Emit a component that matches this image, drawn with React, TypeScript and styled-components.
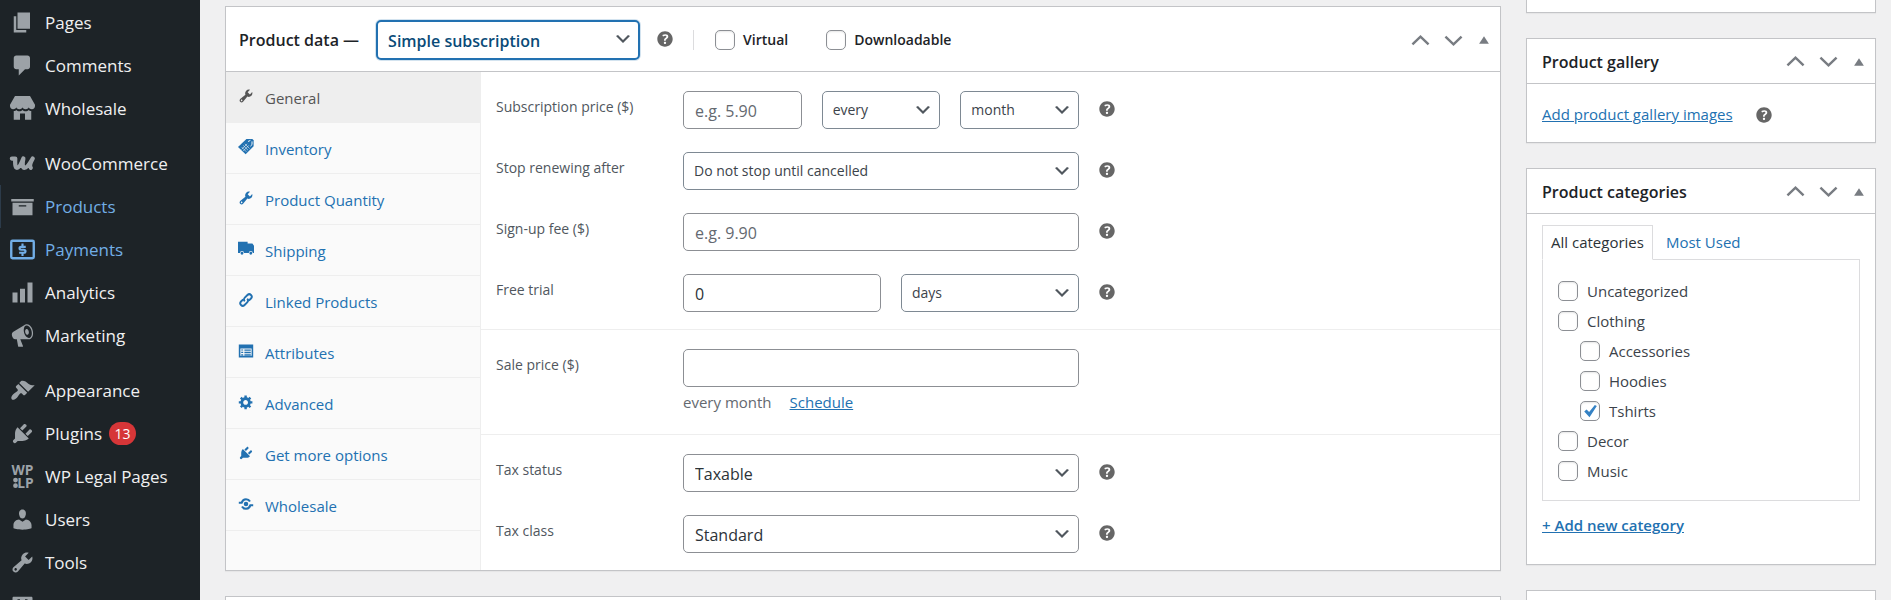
import React, { useId, useState } from "react";
import styled, { createGlobalStyle, css } from "styled-components";

const GlobalStyle = createGlobalStyle`
  * { box-sizing: border-box; }
  body {
    margin: 0;
    background: #f0f0f1;
    color: #3c434a;
    font-family: "Segoe UI", "Open Sans", "Noto Sans", sans-serif;
    font-size: 15px;
    line-height: 24px;
  }
  button, input, select { font-family: inherit; color: inherit; margin: 0; }
  ul { list-style: none; margin: 0; padding: 0; }
`;

/* ---------- icons ---------- */

const wrench =
  "M16.68 9.77c-1.34 1.34-3.3 1.67-4.95.99l-5.41 6.52c-.99.99-2.59.99-3.58 0s-.99-2.59 0-3.57l6.52-5.42c-.68-1.65-.35-3.61.99-4.95 1.28-1.28 3.12-1.62 4.72-1.06l-2.89 2.89 2.82 2.82 2.86-2.87c.53 1.58.18 3.39-1.08 4.65zM3.81 16.21c.4.39 1.04.39 1.43 0 .4-.4.4-1.04 0-1.43-.39-.4-1.03-.4-1.43 0-.39.39-.39 1.03 0 1.43z";
const plug =
  "M13.11 4.36L9.87 7.6 8 5.73l3.24-3.24c.35-.34 1.05-.2 1.56.32.52.51.66 1.21.31 1.55zm-8 1.77l.91-1.12 9.01 9.01-1.19.84c-.71.71-2.63 1.16-3.82 1.16H6.14L4.9 17.26c-.59.59-1.54.59-2.12 0-.59-.58-.59-1.53 0-2.12l1.24-1.24v-3.88c0-1.13.4-3.19 1.09-3.89zm7.26 3.97l3.24-3.24c.34-.35 1.04-.21 1.55.31.52.51.66 1.21.31 1.55l-3.24 3.25z";

const icons: Record<string, React.ReactNode> = {
  pages: <path d="M6 15V2h10v13H6zm-1 1h8v2H3V5h2v11z" />,
  comments: (
    <path d="M5 2h9c1.1 0 2 .9 2 2v7c0 1.1-.9 2-2 2h-2l-5 5v-5H5c-1.1 0-2-.9-2-2V4c0-1.1.9-2 2-2z" />
  ),
  store: (
    <path d="M4 0h12l4 7v1c0 1.5-1 2.6-2.5 2.6S15 9.8 15 8.8c0 1-1 1.8-2.5 1.8S10 9.8 10 8.8c0 1-1 1.8-2.5 1.8S5 9.8 5 8.8c0 1-1 1.8-2.5 1.8S0 9.5 0 8V7zM3 12c1 0 1.7-.4 2-.9.6.7 1.5 1 2.5 1s1.9-.3 2.5-1c.6.7 1.5 1 2.5 1s1.9-.3 2.5-1c.4.5 1.2.9 2 .9v7h-5v-5H8v5H3z" />
  ),
  woo: (
    <path
      d="M1.5 6H4.2C4 9.500 4 13.400 5.600 13.400 7.800 13.400 9.500 9 10.700 6 10 9 9.700 13.400 11.600 13.400 14 13.400 16.500 9 18.200 6 16.500 9 15.500 12 16.600 13.400"
      fill="none"
      stroke="currentColor"
      strokeWidth="3.4"
      strokeLinecap="round"
      strokeLinejoin="round"
    />
  ),
  products: <path d="M19 4v2H1V4h18zM2 7h16v10H2V7zm11 3V9H7v1h6z" />,
  payments: (
    <>
      <rect x="1" y="3" width="18" height="14" rx="1" fill="none" stroke="currentColor" strokeWidth="1.9" />
      <path
        d="M12.6 7.9H8.9c-1.7 0-1.7 2.3 0 2.3h2.1c1.9 0 1.9 2.4 0 2.4H7.3M10 5.2v2.5M10 12.5v2.6"
        fill="none"
        stroke="currentColor"
        strokeWidth="1.7"
      />
    </>
  ),
  analytics: <path d="M18 18V2h-4v16h4zm-6 0V7H8v11h4zm-6 0v-8H2v8h4z" />,
  marketing: (
    <path d="M18.15 5.94c.46 1.62.38 3.22-.02 4.48-.42 1.28-1.26 2.18-2.3 2.48-.16.06-.26.06-.4.06-.06.02-.12.02-.18.02-.06.02-.14.02-.22.02h-6.8l2.22 5.5c.02.14-.06.26-.14.34-.08.1-.24.16-.34.16H6.95c-.1 0-.26-.06-.34-.16-.08-.08-.16-.2-.14-.34l-1-5.5H4.25l-.02-.02c-.5.06-1.08-.18-1.54-.62s-.88-1.08-1.06-1.88c-.24-.8-.2-1.56-.02-2.2.18-.62.58-1.08 1.06-1.3l.02-.02 9-5.4c.1-.06.18-.1.24-.16.06-.04.14-.08.24-.12.16-.08.28-.12.5-.18 1.04-.3 2.24.1 3.22.98s1.84 2.24 2.26 3.86zm-2.58 5.98h-.02c.4-.1.74-.34 1.04-.7.58-.7.86-1.76.86-3.04 0-.64-.1-1.3-.28-1.98-.34-1.36-1.02-2.5-1.78-3.24s-1.68-1.1-2.46-.88c-.82.22-1.4.96-1.7 2-.32 1.04-.28 2.36.06 3.72.38 1.36 1 2.5 1.8 3.24.78.74 1.62 1.1 2.48.88zm-2.54-7.08c.22-.04.42-.02.62.04.38.16.76.48 1.02 1s.42 1.2.42 1.78c0 .3-.04.56-.12.8-.18.48-.44.84-.86.94-.34.1-.8-.06-1.14-.4s-.64-.86-.78-1.5c-.18-.62-.12-1.24.02-1.72s.48-.84.82-.94z" />
  ),
  appearance: (
    <path d="M14.48 11.06L7.41 3.99l1.5-1.5c.5-.56 2.3-.47 3.51.32 1.21.8 1.43 1.28 2.91 2.1 1.18.64 2.45 1.26 4.45.85zm-.71.71L6.7 4.7 4.93 6.47c-.39.39-.39 1.02 0 1.41l1.06 1.06c.39.39.39 1.03 0 1.42-.6.6-1.43 1.11-2.21 1.69-.35.26-.7.53-1.01.84C1.43 14.23.4 16.08 1.4 17.07c.99 1 2.84-.03 4.18-1.36.31-.31.58-.66.85-1.02.57-.78 1.08-1.61 1.69-2.21.39-.39 1.02-.39 1.41 0l1.06 1.06c.39.39 1.02.39 1.41 0z" />
  ),
  plugins: <path d={plug} />,
  legal: (
    <>
      <text x="10" y="9" textAnchor="middle" fontSize="11" fontWeight="700">WP</text>
      <text x="19" y="19" textAnchor="end" fontSize="11" fontWeight="700">LP</text>
      <circle cx="4.4" cy="12.8" r="1.9" />
      <circle cx="4.4" cy="17.3" r="1.9" />
    </>
  ),
  users: (
    <path d="M10 9.25c-2.27 0-2.73-3.44-2.73-3.44C7 4.02 7.82 2 9.97 2c2.16 0 2.98 2.02 2.71 3.81 0 0-.41 3.44-2.68 3.44zm0 2.57L12.72 10c2.39 0 4.52 2.33 4.52 4.53v2.49s-3.65 1.13-7.24 1.13c-3.65 0-7.24-1.13-7.24-1.13v-2.49c0-2.25 1.94-4.48 4.47-4.48z" />
  ),
  tools: <path d={wrench} />,
  settings: (
    <path
      d="M18 16V4c0-.55-.45-1-1-1H3c-.55 0-1 .45-1 1v12c0 .55.45 1 1 1h14c.55 0 1-.45 1-1zM6 5h2v6H6zM12 5h2v3h-2z"
      fillRule="evenodd"
    />
  ),
  tag: (
    <>
      <path d="M10.500 0H18l1.500 1.500v7.500L9.500 19 0 10z" />
      <path d="M4.500 10l6 6M6.500 8l6 6M8.500 6l6 6M11.500 6l-7 7M13.500 8l-7 7" stroke="#fafafa" strokeWidth=".7" />
      <path d="M12.500 3.200l3-1.500M17.500 3v4l-2 2" stroke="#fafafa" strokeWidth="1.2" fill="none" />
    </>
  ),
  truck: (
    <path d="M0 1h12v2h6l2 3v9h-1.500a2.500 2.500 0 0 0-5 0h-6a2.500 2.500 0 0 0-5 0H0zM5 13.500a1.800 1.800 0 1 1 0 3.600 1.800 1.800 0 0 1 0-3.600zM16 13.500a1.800 1.800 0 1 1 0 3.600 1.800 1.800 0 0 1 0-3.600z" />
  ),
  link: (
    <path
      d="M8.5 11.5c-1.4-1.4-1.4-3 0-4.400l3.300-3.300c3-3 7.300 1.300 4.400 4.300l-2.700 2.700M11.500 8.500c1.400 1.400 1.400 3 0 4.400l-3.300 3.300c-3 3-7.300-1.300-4.400-4.300l2.700-2.700"
      fill="none"
      stroke="currentColor"
      strokeWidth="2.4"
    />
  ),
  attributes: (
    <path
      d="M1 2h18v16H1zM3 7v9h14V7zM4 8h2.5v1.5H4zM4 11h2.5v1.5H4zM4 14h2.5v1.5H4zM8 8h8v1.7H8zM8 11h8v1.7H8zM8 14h8v1.5H8z"
      fillRule="evenodd"
    />
  ),
  gear: (
    <path d="M18 12h-2.18c-.17.7-.44 1.35-.81 1.93l1.54 1.54-2.1 2.1-1.54-1.54c-.58.36-1.23.63-1.91.79V19H8v-2.18c-.68-.16-1.33-.43-1.91-.79l-1.54 1.54-2.12-2.12 1.54-1.54c-.36-.58-.63-1.23-.79-1.91H1V9.03h2.17c.16-.7.44-1.35.8-1.94L2.43 5.55l2.1-2.1 1.54 1.54c.58-.37 1.24-.64 1.93-.81V2h3v2.18c.68.16 1.33.43 1.91.79l1.54-1.54 2.12 2.12-1.54 1.54c.36.59.64 1.24.8 1.94H18V12zm-8.5 1.5c1.66 0 3-1.34 3-3s-1.34-3-3-3-3 1.34-3 3 1.34 3 3 3z" />
  ),
  exchange: (
    <>
      <path
        d="M1 8.5h3.5c1-3 3-4.5 5.5-4.5 2.3 0 4 1 5 2.8M19 11.5h-3.5c-1 3-3 4.5-5.5 4.5-2.3 0-4-1-5-2.8"
        fill="none"
        stroke="currentColor"
        strokeWidth="2.6"
      />
      <circle cx="10" cy="10" r="2.8" />
    </>
  ),
  help: (
    <path d="M17 10c0-3.87-3.14-7-7-7-3.87 0-7 3.13-7 7s3.13 7 7 7c3.86 0 7-3.13 7-7zm-6.3 1.48H9.14v-.43c0-.38.08-.7.24-.98s.46-.57.88-.89c.41-.29.68-.53.81-.71.14-.18.2-.39.2-.62 0-.25-.09-.44-.28-.58-.19-.13-.45-.19-.79-.19-.58 0-1.25.19-2 .57l-.64-1.28c.87-.49 1.8-.74 2.77-.74.81 0 1.45.2 1.92.58.48.39.71.91.71 1.55 0 .43-.09.8-.29 1.11-.19.32-.57.67-1.11 1.06-.38.28-.61.49-.71.63-.1.15-.15.34-.15.57v.35zm-1.47 2.74c-.18-.17-.27-.42-.27-.73 0-.33.08-.58.26-.75s.43-.25.77-.25c.32 0 .57.09.75.26s.27.42.27.74c0 .3-.09.55-.27.72-.18.18-.43.27-.75.27-.33 0-.58-.09-.76-.26z" />
  ),
  chevron: <path d="M5 6l5 5 5-5 2 1-7 7-7-7 2-1z" />,
  up: <path d="M1.5 14l8.5-8 8.5 8" fill="none" stroke="currentColor" strokeWidth="2.6" />,
  down: <path d="M1.5 6l8.5 8 8.5-8" fill="none" stroke="currentColor" strokeWidth="2.6" />,
  toggle: <path d="M3 15.5l7-11 7 11z" />,
};

const Svg = styled.svg<{ $size: number }>`
  display: block;
  flex: none;
  width: ${(p) => p.$size}px;
  height: ${(p) => p.$size}px;
  fill: currentColor;
`;

const Icon = ({ name, size }: { name: string; size: number }) => (
  <Svg $size={size} viewBox="0 0 20 20" aria-hidden="true">
    {icons[name]}
  </Svg>
);

/* ---------- page frame ---------- */

const Page = styled.div`
  display: flex;
  height: 100vh;
  overflow: hidden;
`;

const Sidebar = styled.nav`
  flex: 0 0 200px;
  padding-top: 1px;
  background: #1d2327;
  overflow: hidden;
`;

const MenuGroup = styled.ul`
  margin-bottom: 12px;
`;

const MenuLink = styled.a<{ $tone?: "open" | "hot" }>`
  display: flex;
  align-items: center;
  gap: 10px;
  height: 43px;
  padding-left: 10px;
  font-size: 17px;
  white-space: nowrap;
  text-decoration: none;
  color: ${(p) => (p.$tone ? "#72aee6" : "#f0f0f1")};
  box-shadow: ${(p) => (p.$tone === "open" ? "inset 1px 0 #2c3b4a" : "none")};

  svg {
    overflow: visible;
    color: ${(p) => (p.$tone === "hot" ? "#72aee6" : "#9ca2a7")};
  }
`;

const Count = styled.span`
  min-width: 27px;
  margin-left: -3px;
  border-radius: 12px;
  background: #d63638;
  color: #fff;
  font-size: 14px;
  line-height: 23px;
  text-align: center;
`;

const Content = styled.main`
  flex: 1;
  display: flex;
  align-items: flex-start;
  gap: 25px;
  min-width: 0;
  padding: 0 15px 0 25px;
`;

const Column = styled.div<{ $side?: boolean }>`
  display: flex;
  flex-direction: column;
  gap: 25px;
  min-width: 0;
  ${(p) =>
    p.$side
      ? css`
          flex: 0 0 350px;
        `
      : css`
          flex: 1;
          padding-top: 6px;
        `}
`;

const Panel = styled.section`
  border: 1px solid #c3c4c7;
  background: #fff;
  box-shadow: 0 1px 1px rgba(0, 0, 0, 0.04);
`;

const PanelAbove = styled(Panel)`
  height: 13px;
  border-top: 0;
`;

const PanelBelow = styled(Panel)`
  height: 60px;
`;

const PanelHeader = styled.header<{ $tall?: boolean }>`
  display: flex;
  align-items: center;
  height: ${(p) => (p.$tall ? 65 : 45)}px;
  padding: ${(p) => (p.$tall ? "2px 9px 0 13px" : "1px 9px 0 15px")};
  border-bottom: 1px solid #c3c4c7;
`;

const PanelTitle = styled.h2`
  margin: 0;
  color: #1d2327;
  font-size: 16px;
  font-weight: 600;
  line-height: 24px;
  white-space: nowrap;
`;

const Actions = styled.div`
  display: flex;
  align-items: center;
  gap: 14px;
  margin-left: auto;
  color: #787c82;
`;

const IconButton = styled.button`
  display: flex;
  padding: 0;
  border: 0;
  background: none;
  color: inherit;
  cursor: pointer;
`;

const HelpButton = styled(IconButton)`
  flex: none;
  padding-bottom: 2px;
  color: #666;
`;

const Help = ({ topic }: { topic: string }) => (
  <HelpButton type="button" aria-label={`Help: ${topic}`}>
    <Icon name="help" size={22} />
  </HelpButton>
);

const PanelActions = ({ title }: { title: string }) => (
  <Actions>
    <IconButton type="button" aria-label={`Move ${title} up`}>
      <Icon name="up" size={19} />
    </IconButton>
    <IconButton type="button" aria-label={`Move ${title} down`}>
      <Icon name="down" size={19} />
    </IconButton>
    <IconButton type="button" aria-label={`Toggle ${title}`}>
      <Icon name="toggle" size={14} />
    </IconButton>
  </Actions>
);

/* ---------- form controls ---------- */

const control = css`
  width: 100%;
  height: 38px;
  padding: 1px 11px 0;
  border: 1px solid #8c8f94;
  border-radius: 5px;
  background: #fff;
  color: #2c3338;
  font-size: 16px;
  outline: 0;
`;

const TextInput = styled.input`
  ${control}
  &::placeholder {
    color: #646970;
    opacity: 1;
  }
`;

type SelectLook = "plain" | "small" | "title";

const SelectBox = styled.span`
  position: relative;
  display: block;
  min-width: 0;

  svg {
    position: absolute;
    right: 7px;
    top: 9px;
    color: #50575e;
    pointer-events: none;
  }
`;

const SelectControl = styled.select<{ $look: SelectLook }>`
  ${control}
  appearance: none;
  ${(p) =>
    p.$look === "small" &&
    css`
      padding: 0 10px 1px;
      border-color: #7e8993;
      color: #3c434a;
      font-size: 14px;
    `}
  ${(p) =>
    p.$look === "title" &&
    css`
      width: 264px;
      height: 40px;
      padding: 1px 10px 0;
      border: 2px solid #2271b1;
      box-shadow: 0 0 0 1px rgba(34, 113, 177, 0.2);
      color: #0a4b78;
      font-weight: 600;
    `}
`;

const Select = ({
  id,
  label,
  options,
  look = "plain",
}: {
  id?: string;
  label?: string;
  options: string[];
  look?: SelectLook;
}) => (
  <SelectBox>
    <SelectControl id={id} aria-label={label} $look={look}>
      {options.map((o) => (
        <option key={o}>{o}</option>
      ))}
    </SelectControl>
    <Icon name="chevron" size={20} />
  </SelectBox>
);

const CheckLabel = styled.label<{ $strong?: boolean }>`
  display: inline-flex;
  align-items: center;
  gap: ${(p) => (p.$strong ? 8 : 9)}px;
  white-space: nowrap;
  ${(p) =>
    p.$strong &&
    css`
      color: #1d2327;
      font-size: 14px;
      font-weight: 600;
    `}
`;

const CheckMark = styled.span`
  position: relative;
  display: flex;

  input {
    appearance: none;
    width: 20px;
    height: 20px;
    border: 1px solid #8c8f94;
    border-radius: 5px;
    background: #fff;
    box-shadow: inset 0 1px 2px rgba(0, 0, 0, 0.1);
  }
  svg {
    position: absolute;
    inset: 0;
    color: #3582c4;
    pointer-events: none;
  }
  input:not(:checked) + svg {
    visibility: hidden;
  }
`;

const Check = ({ text, strong, on = false }: { text: string; strong?: boolean; on?: boolean }) => {
  const [checked, setChecked] = useState(on);
  return (
    <CheckLabel $strong={strong}>
      <CheckMark>
        <input type="checkbox" checked={checked} onChange={(e) => setChecked(e.target.checked)} />
        <Svg $size={20} viewBox="0 0 20 20" aria-hidden="true">
          <path d="M14.83 3.9l2 1.1-7.3 11.3-5.3-5.9 2.3-2 2.6 2.7z" />
        </Svg>
      </CheckMark>
      {text}
    </CheckLabel>
  );
};

/* ---------- product data ---------- */

const TypePicker = styled.div`
  display: flex;
  align-items: center;
  gap: 14px;

  ${PanelTitle} {
    margin-right: 3px;
  }
`;

const TypeFlags = styled.div`
  display: flex;
  align-items: center;
  gap: 38px;
  margin-left: 17px;

  &::before {
    content: "";
    width: 1px;
    height: 20px;
    margin-right: -17px;
    background: #dcdcde;
  }
`;

const DataBody = styled.div`
  display: flex;
`;

const Tabs = styled.ul`
  flex: 0 0 255px;
  border-right: 1px solid #eee;
  background: #fafafa;
`;

const TabLink = styled.a<{ $current?: boolean }>`
  display: flex;
  align-items: center;
  gap: 11px;
  height: 51px;
  padding: 2px 0 0 12px;
  border-bottom: 1px solid #eee;
  background: ${(p) => (p.$current ? "#eee" : "transparent")};
  color: ${(p) => (p.$current ? "#555" : "#2271b1")};
  text-decoration: none;

  svg {
    margin-bottom: 5px;
  }
`;

const Fields = styled.div`
  flex: 1;
  min-width: 0;
`;

const FieldGroup = styled.div`
  display: flex;
  flex-direction: column;
  gap: 23px;
  padding: 19px 25px 17px 15px;

  & + & {
    border-top: 1px solid #eee;
  }
`;

const Field = styled.div`
  display: flex;
`;

const FieldLabel = styled.label`
  flex: 0 0 187px;
  font-size: 14px;
  line-height: 32px;
  color: #50575e;
`;

const FieldMain = styled.div`
  flex: 1;
`;

const FieldControls = styled.div`
  display: flex;
  align-items: center;
  gap: 17px;
`;

const Inputs = styled.div<{ $columns: string }>`
  display: grid;
  grid-template-columns: ${(p) => p.$columns};
  gap: 20px;
  width: 50%;
`;

const Note = styled.p`
  display: flex;
  gap: 18px;
  margin: 3px 0;
  color: #646970;
`;

const TextLink = styled.a<{ $strong?: boolean }>`
  color: #2271b1;
  text-decoration: underline;
  font-weight: ${(p) => (p.$strong ? 600 : 400)};
`;

const FormRow = ({
  label,
  columns = "1fr",
  help = true,
  note,
  children,
}: {
  label: string;
  columns?: string;
  help?: boolean;
  note?: React.ReactNode;
  children: (id: string) => React.ReactNode;
}) => {
  const id = useId();
  return (
    <Field>
      <FieldLabel htmlFor={id}>{label}</FieldLabel>
      <FieldMain>
        <FieldControls>
          <Inputs $columns={columns}>{children(id)}</Inputs>
          {help && <Help topic={label} />}
        </FieldControls>
        {note}
      </FieldMain>
    </Field>
  );
};

/* ---------- side panels ---------- */

const GalleryBody = styled.div`
  display: flex;
  align-items: center;
  gap: 20px;
  height: 58px;
  padding: 1px 15px 0;

  ${HelpButton} {
    padding: 2px 0 0;
  }
`;

const CategoryBody = styled.div`
  padding: 11px 15px 27px;
`;

const CategoryTabs = styled.ul`
  display: flex;
`;

const CategoryTab = styled.li<{ $current?: boolean }>`
  margin-bottom: -1px;
  padding: 4px ${(p) => (p.$current ? 8 : 12)}px 5px;
  border: 1px solid ${(p) => (p.$current ? "#dcdcde" : "transparent")};
  border-bottom-color: ${(p) => (p.$current ? "#fff" : "transparent")};

  a {
    color: ${(p) => (p.$current ? "#2c3338" : "#2271b1")};
    text-decoration: none;
  }
`;

const CategoryList = styled.ul`
  display: flex;
  flex-direction: column;
  gap: 6px;
  margin-bottom: 12px;
  padding: 19px 15px 17px;
  border: 1px solid #dcdcde;
`;

const CategoryItem = styled.li<{ $child?: boolean }>`
  display: flex;
  padding-left: ${(p) => (p.$child ? 22 : 0)}px;
`;

const menu: { label: string; icon: string; tone?: "open" | "hot"; count?: number }[][] = [
  [
    { label: "Pages", icon: "pages" },
    { label: "Comments", icon: "comments" },
    { label: "Wholesale", icon: "store" },
  ],
  [
    { label: "WooCommerce", icon: "woo" },
    { label: "Products", icon: "products", tone: "open" },
    { label: "Payments", icon: "payments", tone: "hot" },
    { label: "Analytics", icon: "analytics" },
    { label: "Marketing", icon: "marketing" },
  ],
  [
    { label: "Appearance", icon: "appearance" },
    { label: "Plugins", icon: "plugins", count: 13 },
    { label: "WP Legal Pages", icon: "legal" },
    { label: "Users", icon: "users" },
    { label: "Tools", icon: "tools" },
    { label: "Settings", icon: "settings" },
  ],
];

const tabs = [
  ["General", "tools"],
  ["Inventory", "tag"],
  ["Product Quantity", "tools"],
  ["Shipping", "truck"],
  ["Linked Products", "link"],
  ["Attributes", "attributes"],
  ["Advanced", "gear"],
  ["Get more options", "plugins"],
  ["Wholesale", "exchange"],
];

const categories = [
  { name: "Uncategorized" },
  { name: "Clothing" },
  { name: "Accessories", child: true },
  { name: "Hoodies", child: true },
  { name: "Tshirts", child: true, on: true },
  { name: "Decor" },
  { name: "Music" },
];

export default function App() {
  return (
    <Page>
      <GlobalStyle />
      <Sidebar aria-label="Admin menu">
        {menu.map((group, i) => (
          <MenuGroup key={i}>
            {group.map((item) => (
              <li key={item.label}>
                <MenuLink href="#" $tone={item.tone}>
                  <Icon name={item.icon} size={25} />
                  {item.label}
                  {item.count && <Count>{item.count}</Count>}
                </MenuLink>
              </li>
            ))}
          </MenuGroup>
        ))}
      </Sidebar>

      <Content>
        <Column>
          <Panel>
            <PanelHeader $tall>
              <TypePicker>
                <PanelTitle>Product data —</PanelTitle>
                <Select label="Product type" look="title" options={["Simple subscription"]} />
                <Help topic="Product type" />
              </TypePicker>
              <TypeFlags>
                <Check text="Virtual" strong />
                <Check text="Downloadable" strong />
              </TypeFlags>
              <PanelActions title="Product data" />
            </PanelHeader>
            <DataBody>
              <Tabs>
                {tabs.map(([label, icon], i) => (
                  <li key={label}>
                    <TabLink href="#" $current={i === 0}>
                      <Icon name={icon} size={16} />
                      {label}
                    </TabLink>
                  </li>
                ))}
              </Tabs>
              <Fields>
                <FieldGroup>
                  <FormRow label="Subscription price ($)" columns="1fr 1fr 1fr">
                    {(id) => (
                      <>
                        <TextInput id={id} placeholder="e.g. 5.90" />
                        <Select label="Billing interval" look="small" options={["every"]} />
                        <Select label="Billing period" look="small" options={["month"]} />
                      </>
                    )}
                  </FormRow>
                  <FormRow label="Stop renewing after">
                    {(id) => <Select id={id} look="small" options={["Do not stop until cancelled"]} />}
                  </FormRow>
                  <FormRow label="Sign-up fee ($)">
                    {(id) => <TextInput id={id} placeholder="e.g. 9.90" />}
                  </FormRow>
                  <FormRow label="Free trial" columns="10fr 9fr">
                    {(id) => (
                      <>
                        <TextInput id={id} defaultValue="0" />
                        <Select label="Trial period" look="small" options={["days"]} />
                      </>
                    )}
                  </FormRow>
                </FieldGroup>
                <FieldGroup>
                  <FormRow
                    label="Sale price ($)"
                    help={false}
                    note={
                      <Note>
                        every month <TextLink href="#">Schedule</TextLink>
                      </Note>
                    }
                  >
                    {(id) => <TextInput id={id} />}
                  </FormRow>
                </FieldGroup>
                <FieldGroup>
                  <FormRow label="Tax status">{(id) => <Select id={id} options={["Taxable"]} />}</FormRow>
                  <FormRow label="Tax class">{(id) => <Select id={id} options={["Standard"]} />}</FormRow>
                </FieldGroup>
              </Fields>
            </DataBody>
          </Panel>
          <PanelBelow />
        </Column>

        <Column $side>
          <PanelAbove />
          <Panel>
            <PanelHeader>
              <PanelTitle>Product gallery</PanelTitle>
              <PanelActions title="Product gallery" />
            </PanelHeader>
            <GalleryBody>
              <TextLink href="#">Add product gallery images</TextLink>
              <Help topic="Product gallery" />
            </GalleryBody>
          </Panel>
          <Panel>
            <PanelHeader>
              <PanelTitle>Product categories</PanelTitle>
              <PanelActions title="Product categories" />
            </PanelHeader>
            <CategoryBody>
              <CategoryTabs>
                <CategoryTab $current>
                  <a href="#">All categories</a>
                </CategoryTab>
                <CategoryTab>
                  <a href="#">Most Used</a>
                </CategoryTab>
              </CategoryTabs>
              <CategoryList>
                {categories.map((c) => (
                  <CategoryItem key={c.name} $child={c.child}>
                    <Check text={c.name} on={c.on} />
                  </CategoryItem>
                ))}
              </CategoryList>
              <TextLink href="#" $strong>
                + Add new category
              </TextLink>
            </CategoryBody>
          </Panel>
          <PanelBelow />
        </Column>
      </Content>
    </Page>
  );
}
